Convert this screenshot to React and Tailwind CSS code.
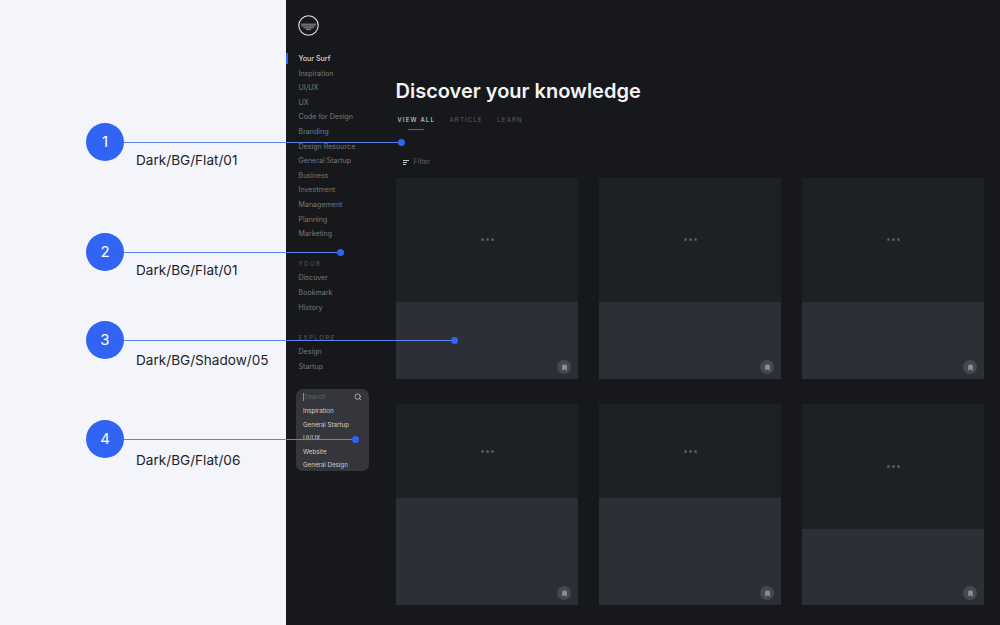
import { Search, Bookmark } from "lucide-react";

const topics = ["Inspiration", "UI/UX", "UX", "Code for Design", "Branding", "Design Resource", "General Startup", "Business", "Investment", "Management", "Planning", "Marketing"];
const yourLinks = ["Discover", "Bookmark", "History"];
const exploreLinks = ["Design", "Startup"];
const searchItems = ["Inspiration", "General Startup", "UI/UX", "Website", "General Design"];

const cards = [
    { top: "h-[124px]", dots: "pt-[60px]" },
    { top: "h-[124px]", dots: "pt-[60px]" },
    { top: "h-[124px]", dots: "pt-[60px]" },
    { top: "h-[94px]", dots: "pt-[46px]" },
    { top: "h-[94px]", dots: "pt-[46px]" },
    { top: "h-[125px]", dots: "pt-[61px]" },
];

const notes = [
    { n: 1, label: "Dark/BG/Flat/01", y: "top-[123px]", line: "w-[278px]", gap: "mt-[-10px]" },
    { n: 2, label: "Dark/BG/Flat/01", y: "top-[233px]", line: "w-[217px]", gap: "mt-[-10px]" },
    { n: 3, label: "Dark/BG/Shadow/05", y: "top-[321px]", line: "w-[331px]", gap: "mt-[-8px]" },
    { n: 4, label: "Dark/BG/Flat/06", y: "top-[420px]", line: "w-[232px]", gap: "mt-[-7px]" },
];

const NavLink = ({ children }) => (
    <p className="h-[14.6px] text-[7.1px] leading-[14.6px] text-[#76797d]">{children}</p>
);

const Card = ({ top, dots }) => (
    <div className="relative flex h-[201px] flex-col bg-[#2c2f35]">
        <div className={`${top} ${dots} flex justify-center gap-[2px] bg-[#1c2124]`}>
            <span className="h-[3px] w-[3px] rounded-full bg-[#54585b]"></span>
            <span className="h-[3px] w-[3px] rounded-full bg-[#54585b]"></span>
            <span className="h-[3px] w-[3px] rounded-full bg-[#54585b]"></span>
        </div>
        <div className="absolute right-[7px] bottom-[5px] flex h-[14px] w-[14px] items-center justify-center rounded-full bg-[#45484d]">
            <Bookmark size={7} className="fill-[#8d9094] text-[#8d9094]" />
        </div>
    </div>
);

const App = () => {
    return (
        <div className="relative flex h-[625px] w-[1000px] overflow-hidden font-['Inter',sans-serif] antialiased">
            <div className="w-[286px] bg-[#f3f5fb]"></div>

            <div className="flex flex-1 bg-[#17181c]">
                {/* Sidebar */}
                <div className="relative w-[110px] pt-[15px]">
                    <svg className="ml-[12px] block" width="21" height="21" viewBox="0 0 21 21" fill="none">
                        <circle cx="10.5" cy="10.5" r="9.7" stroke="#e8e8e8" strokeWidth="1.1" />
                        <path d="M3 9.2h15M3.5 11h14M5.5 12.8h10M8 14.4h5" stroke="#bdbdbd" strokeWidth="0.8" />
                    </svg>

                    <div className="mt-[16px] pl-[12.5px]">
                        <p className="h-[14.6px] text-[7.1px] leading-[14.6px] font-medium text-[#d9dadb]">Your Surf</p>
                        {topics.map((t) => <NavLink key={t}>{t}</NavLink>)}
                    </div>
                    <div className="absolute top-[53px] left-0 h-[11px] w-[2px] bg-[#3563f0]"></div>

                    <div className="mt-[15px] pl-[12.5px]">
                        <p className="h-[14.6px] text-[6px] leading-[14.6px] tracking-[1.5px] text-[#5c5f63]">YOUR</p>
                        {yourLinks.map((t) => <NavLink key={t}>{t}</NavLink>)}
                    </div>

                    <div className="mt-[15.5px] pl-[12.5px]">
                        <p className="h-[14.6px] text-[6px] leading-[14.6px] tracking-[1.5px] text-[#5c5f63]">EXPLORE</p>
                        {exploreLinks.map((t) => <NavLink key={t}>{t}</NavLink>)}
                    </div>

                    <div className="mt-[15px] ml-[10px] h-[82px] w-[73px] rounded-[7px] bg-[#34363b] px-[7px] pt-[1px]">
                        <div className="flex h-[13px] items-center justify-between">
                            <span className="border-l border-[#8a8c90] text-[6.5px] leading-[8px] text-[#5f6165]">Search</span>
                            <Search size={8} className="text-[#d8d8d8]" />
                        </div>
                        <div className="pt-[1px]">
                            {searchItems.map((t) => (
                                <p key={t} className="h-[13.5px] text-[6.2px] leading-[13.5px] text-[#cfd0d2]">{t}</p>
                            ))}
                        </div>
                    </div>
                </div>

                {/* Main */}
                <div className="flex-1 pt-[78px]">
                    <h1 className="ml-[-0.5px] text-[20px] leading-[26px] font-semibold text-[#f4f4f5]">Discover your knowledge</h1>

                    <div className="mt-[8px] flex gap-[14.5px] pl-[1.5px]">
                        <div className="relative h-[20px] text-[6px] leading-[16px] tracking-[1.2px] text-[#e2e2e3]">
                            VIEW ALL
                            <span className="absolute top-[17px] left-[10.5px] h-px w-[16px] bg-[#3563f0]"></span>
                        </div>
                        <span className="text-[6px] leading-[16px] tracking-[1.2px] text-[#5f6266]">ARTICLE</span>
                        <span className="text-[6px] leading-[16px] tracking-[1.2px] text-[#5f6266]">LEARN</span>
                    </div>

                    <div className="mt-[23px] flex h-[14px] items-center gap-[4.5px] pl-[7px]">
                        <div className="flex flex-col gap-px">
                            <span className="h-px w-[6px] bg-[#c4c5c7]"></span>
                            <span className="h-px w-[4px] bg-[#c4c5c7]"></span>
                            <span className="h-px w-[3px] bg-[#c4c5c7]"></span>
                        </div>
                        <span className="text-[7.1px] text-[#5c5f63]">Filter</span>
                    </div>

                    <div className="mt-[9px] grid w-[588px] grid-cols-3 gap-x-[21px] gap-y-[25px]">
                        {cards.map((c, i) => (
                            <Card key={i} top={c.top} dots={c.dots} />
                        ))}
                    </div>
                </div>
            </div>

            {/* Callouts */}
            {notes.map((a) => (
                <div key={a.n} className={`absolute left-[86px] ${a.y}`}>
                    <div className="flex items-center">
                        <div className="flex h-[38px] w-[38px] items-center justify-center rounded-full bg-[#3264f4] text-[15px] text-white">{a.n}</div>
                        <div className={`${a.line} relative h-px bg-[#5d80ea]`}>
                            <span className="absolute top-[-3px] right-[-3px] h-[7px] w-[7px] rounded-full bg-[#3264f4]"></span>
                        </div>
                    </div>
                    <p className={`${a.gap} ml-[50px] text-[13.6px] leading-[18px] whitespace-nowrap text-[#1f2128]`}>{a.label}</p>
                </div>
            ))}
        </div>
    );
};

export default App;
